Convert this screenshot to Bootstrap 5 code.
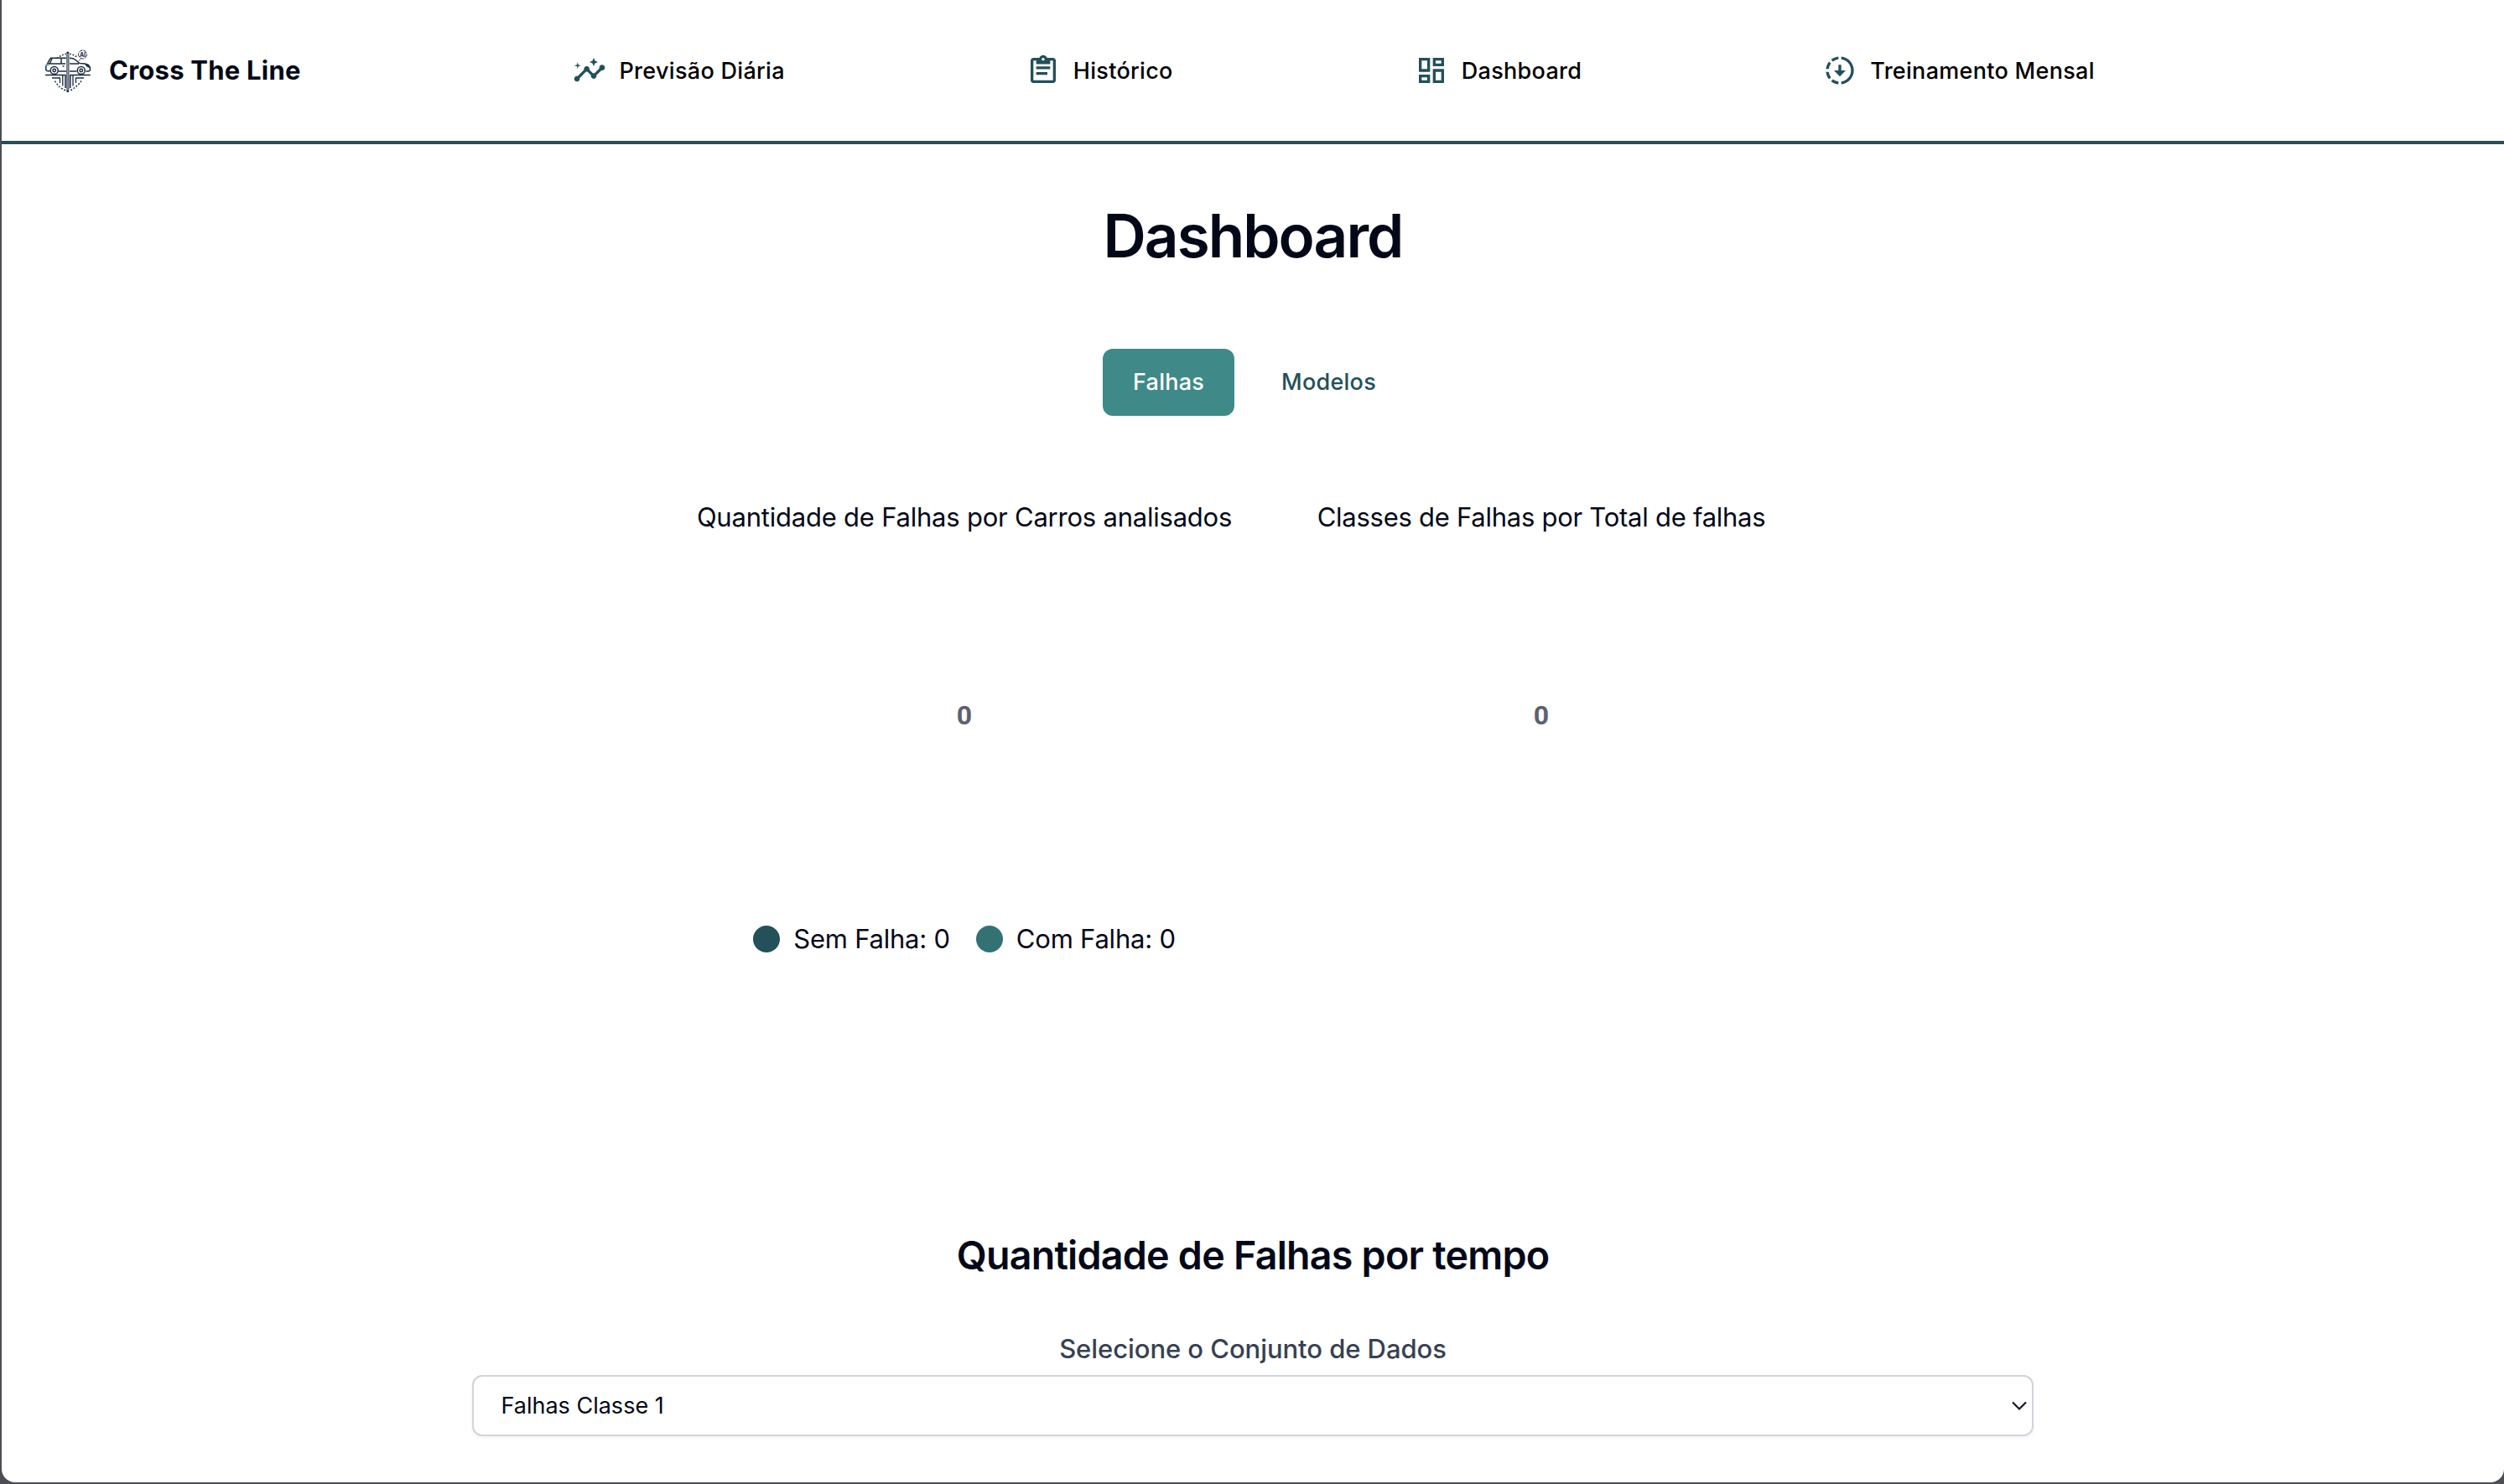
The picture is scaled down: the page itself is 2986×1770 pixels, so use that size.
<!DOCTYPE html>
<html lang="pt-BR">
<head>
<meta charset="utf-8">
<meta name="viewport" content="width=device-width, initial-scale=1">
<title>Cross The Line</title>
<link href="https://cdn.jsdelivr.net/npm/bootstrap@5.3.0/dist/css/bootstrap.min.css" rel="stylesheet">
<style>
  :root { --teal-dark: #235059; --teal: #3f8a89; --ink: #020817; }
  body { background: #4b4e57; color: var(--ink); font-family: Inter, "Liberation Sans", sans-serif; overflow: hidden; }
  .app-window { margin-left: 2px; height: 1768px; border-radius: 0 0 16px 16px; }
  .topbar { height: 172px; border-bottom: 4px solid var(--teal-dark); padding: 0 0 0 38px; }
  .brand-logo { width: 80px; height: 78px; }
  .brand-name { font-size: 31px; letter-spacing: .24px; margin-left: 10px; padding-top: 1px; width: 232px; color: var(--ink); }
  .main-nav { gap: 288px; margin-left: 320.5px; }
  .main-nav .nav-link { color: #000; font-size: 27px; line-height: 40px; font-weight: 500; letter-spacing: .3px; gap: 16px; }
  .main-nav span { padding-top: 1px; }
  .main-nav svg { width: 40px; height: 40px; fill: var(--teal-dark); }
  .page-title { font-size: 71px; line-height: 72px; font-weight: 600; letter-spacing: -1.95px; margin-top: 73px; }
  .view-tabs { margin-top: 99px; gap: 20px; padding-left: 4px; }
  .view-tabs .btn { height: 80px; padding: 1px 36px 0; border: 0; border-radius: 12px; font-size: 27px; font-weight: 500; letter-spacing: .24px; color: var(--teal-dark); }
  .view-tabs .btn.active { background: var(--teal); color: #fff; }
  .charts { margin-top: 96.5px; height: 552px; }
  .chart-col { width: 688px; font-size: 31px; line-height: 48px; letter-spacing: -.22px; }
  .chart-title.second { letter-spacing: -.26px; }
  .chart-area { height: 424px; }
  .chart-total { color: #5e616e; font-family: Roboto, Inter, sans-serif; font-size: 32px; letter-spacing: 0; }
  .chart-legend { gap: 31px; margin-top: 31px; }
  .legend-dot { width: 32px; height: 32px; }
  .section-title { font-size: 46.6px; line-height: 64px; font-weight: 600; letter-spacing: -.77px; margin-top: 320.5px; }
  .select-label { color: #374151; font-size: 31px; line-height: 48px; font-weight: 500; letter-spacing: -.06px; margin-top: 55.5px; }
  .dataset-select { width: 1862px; height: 73px; margin-top: 7.5px; border: 2px solid #d1d5db; border-radius: 12px; padding: 1px 6px 0 32.5px; font-size: 27px; letter-spacing: 0; box-shadow: 0 2px 4px rgba(0,0,0,.05); }
</style>
</head>
<body>
<div class="app-window bg-white">
  <header class="topbar d-flex align-items-center">
    <a class="d-flex align-items-center text-decoration-none" href="#">
      <svg class="brand-logo" viewBox="0 0 80 78" fill="none" stroke="#1c2c3f" stroke-width="1.5" stroke-linejoin="round">
        <path d="M28 24.500q5-4 11-5.300M43 19.200q5 1 9 4" stroke-dasharray="1.800 1.800"/>
        <path d="M25.500 51.500q5 9 13.500 11.500M57 51.500q-4 6-13 11.500" stroke-dasharray="2 1.800"/>
        <path d="M40.800 19v45" stroke-width="3" stroke="#c3c9cf"/>
        <path d="M39.900 20v42M41.900 20v42" stroke-width=".9"/>
        <circle cx="40.800" cy="18" r=".8"/><circle cx="40.800" cy="63.500" r=".8"/>
        <path d="M39 24.300H20.500q-2.500 3.500-4 7-1.500 1-1.700 3v4q.4 1.500 2.500 1.500h2.500M29.500 40H39M16.500 31H38M22 25l-2.500 5.500M33 24.500v6M34.500 34h2"/>
        <path d="M43 24.300q4.500 0 6.500 1.700l5.500 4.500q7 .2 10.500 2 2.300 2 2 5.500-.2 2-2.500 2h-2.500M43 40h8.500M43 31h11M62 31q1 3.500 4.500 4"/>
        <circle cx="24.700" cy="39" r="4.500"/><circle cx="24.700" cy="39" r="1.700"/>
        <circle cx="56.800" cy="39" r="4.500"/><circle cx="56.800" cy="39" r="1.700"/>
        <path d="M14 44.500H38V60M67.800 44.500H43.800V60"/>
        <path d="M22 48H31.500v6M60 48H50.500v6" stroke-width="1.300"/>
        <path d="M34.800 45v12.500M47 45v12.500" stroke-width="1.300"/>
        <path d="M15 32.500h3" stroke="#58b9c4" stroke-width="2.200"/>
        <circle cx="58.500" cy="20" r="5" stroke-width="1" stroke-dasharray="5 1"/>
        <path d="M56 25.500l-2 2.200" stroke-width=".9"/>
        <text x="58.500" y="22.700" font-family="Inter, sans-serif" font-size="7" font-weight="700" text-anchor="middle" fill="#1c2c3f" stroke="none">AI</text>
      </svg>
      <span class="brand-name fw-bold text-nowrap">Cross The Line</span>
    </a>
    <nav class="main-nav nav flex-nowrap text-nowrap">
      <a class="nav-link p-0 d-flex align-items-center" href="#">
        <svg viewBox="0 0 24 24"><path d="M21 8c-1.450 0-2.260 1.440-1.930 2.510l-3.550 3.560c-.3-.09-.74-.09-1.040 0l-2.550-2.550C12.270 10.450 11.460 9 10 9c-1.450 0-2.270 1.440-1.930 2.520l-4.560 4.550C2.440 15.740 1 16.550 1 18c0 1.100.9 2 2 2 1.450 0 2.260-1.440 1.930-2.510l4.550-4.560c.3.09.74.09 1.040 0l2.550 2.550C12.730 16.550 13.540 18 15 18c1.450 0 2.270-1.440 1.930-2.520l3.560-3.550c1.070.33 2.510-.48 2.510-1.930 0-1.100-.9-2-2-2z"/><path d="M15 9l.94-2.070L18 6l-2.060-.93L15 3l-.92 2.070L12 6l2.080.93zM3.500 11L4 9l2-.5L4 8l-.5-2L3 8l-2 .5L3 9z"/></svg>
        <span>Previsão Diária</span>
      </a>
      <a class="nav-link p-0 d-flex align-items-center" href="#">
        <svg viewBox="0 0 24 24"><path fill-rule="evenodd" d="M19 3h-4.180C14.400 1.840 13.300 1 12 1s-2.400.84-2.820 2H5c-1.100 0-2 .9-2 2v14c0 1.100.9 2 2 2h14c1.100 0 2-.9 2-2V5c0-1.100-.9-2-2-2zM12 3c.55 0 1 .45 1 1s-.45 1-1 1-1-.45-1-1 .45-1 1-1zM19 19H5V5h2v2.500h10V5h2z"/><path d="M7 9.200h10v1.900H7zM7 13.200h8v1.900H7z"/></svg>
        <span>Histórico</span>
      </a>
      <a class="nav-link p-0 d-flex align-items-center" href="#">
        <svg viewBox="0 0 24 24"><path d="M19 5v2h-4V5h4M9 5v6H5V5h4m10 8v6h-4v-6h4M9 17v2H5v-2h4M21 3h-8v6h8V3zM11 3H3v10h8V3zm10 8h-8v10h8V11zm-10 4H3v6h8v-6z"/></svg>
        <span>Dashboard</span>
      </a>
      <a class="nav-link p-0 d-flex align-items-center" href="#">
        <svg viewBox="0 0 24 24"><g transform="translate(24 0) scale(-1 1)"><path d="M18.320 4.260C16.840 3.050 15.010 2.250 13 2.050v2.020c1.460.18 2.790.76 3.900 1.620l1.420-1.430zM19.930 11h2.020c-.2-2.010-1-3.840-2.210-5.320L18.310 7.100c.86 1.110 1.440 2.440 1.620 3.900zM18.310 16.900l1.430 1.430c1.210-1.480 2.010-3.320 2.210-5.320h-2.020c-.18 1.450-.76 2.780-1.620 3.890zM13 19.930v2.020c2.010-.2 3.840-1 5.320-2.210l-1.430-1.430c-1.100.86-2.430 1.440-3.890 1.620zM11 19.930v2.020c-5.050-.5-9-4.760-9-9.950s3.950-9.450 9-9.950v2.020C7.050 4.560 4 7.920 4 12s3.050 7.440 7 7.930z"/></g><path d="M11 8h2v4h3.200L12 16.300 7.800 12H11z"/></svg>
        <span>Treinamento Mensal</span>
      </a>
    </nav>
  </header>

  <main class="d-flex flex-column align-items-center">
    <h1 class="page-title mb-0">Dashboard</h1>
    <div class="view-tabs d-flex">
      <button type="button" class="btn active">Falhas</button>
      <button type="button" class="btn">Modelos</button>
    </div>

    <section class="charts d-flex text-center text-nowrap">
      <div class="chart-col">
        <div class="chart-title">Quantidade de Falhas por Carros analisados</div>
        <div class="chart-area d-flex align-items-center justify-content-center"><span class="chart-total fw-bold">0</span></div>
        <div class="chart-legend d-flex justify-content-center">
          <div class="d-flex align-items-center gap-3"><span class="legend-dot rounded-circle" style="background:#235059"></span>Sem Falha: 0</div>
          <div class="d-flex align-items-center gap-3"><span class="legend-dot rounded-circle" style="background:#337272"></span>Com Falha: 0</div>
        </div>
      </div>
      <div class="chart-col">
        <div class="chart-title second">Classes de Falhas por Total de falhas</div>
        <div class="chart-area d-flex align-items-center justify-content-center"><span class="chart-total fw-bold">0</span></div>
      </div>
    </section>

    <h2 class="section-title mb-0">Quantidade de Falhas por tempo</h2>
    <label class="select-label">Selecione o Conjunto de Dados</label>
    <div class="dataset-select d-flex align-items-center justify-content-between bg-white" role="combobox">
      <span>Falhas Classe 1</span>
      <svg width="18" height="12" viewBox="0 0 18 12" fill="none" stroke="#111827" stroke-width="2.200"><path d="M1 1.500l8 8 8-8"/></svg>
    </div>
  </main>
</div>
<script src="https://cdn.jsdelivr.net/npm/bootstrap@5.3.0/dist/js/bootstrap.bundle.min.js"></script>
</body>
</html>
